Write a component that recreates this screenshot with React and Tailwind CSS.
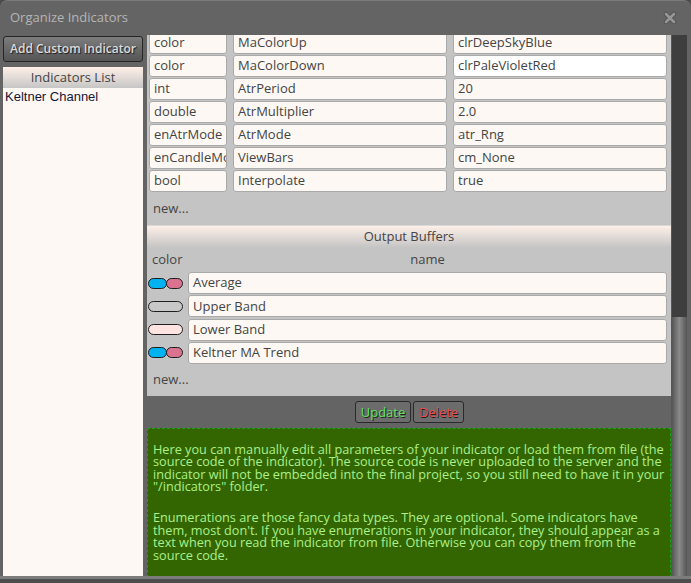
import React from 'react';

const params = [
  ['color', 'MaColorUp', 'clrDeepSkyBlue'],
  ['color', 'MaColorDown', 'clrPaleVioletRed', true],
  ['int', 'AtrPeriod', '20'],
  ['double', 'AtrMultiplier', '2.0'],
  ['enAtrMode', 'AtrMode', 'atr_Rng'],
  ['enCandleMode', 'ViewBars', 'cm_None'],
  ['bool', 'Interpolate', 'true'],
];

const buffers = [
  { name: 'Average', colors: ['bg-[#00b2f0]', 'bg-[#d9738f]'] },
  { name: 'Upper Band', colors: ['bg-[#c8c8c8]'] },
  { name: 'Lower Band', colors: ['bg-[#ffe4e1]'] },
  { name: 'Keltner MA Trend', colors: ['bg-[#00b2f0]', 'bg-[#d9738f]'] },
];

const help1 = [
  'Here you can manually edit all parameters of your indicator or load them from file (the',
  'source code of the indicator). The source code is never uploaded to the server and the',
  'indicator will not be embedded into the final project, so you still need to have it in your',
  '"/indicators" folder.',
];

const help2 = [
  'Enumerations are those fancy data types. They are optional. Some indicators have',
  "them, most don't. If you have enumerations in your indicator, they should appear as a",
  'text when you read the indicator from file. Otherwise you can copy them from the',
  'source code.',
];

function Field({ children, className = '', white }) {
  return (
    <div
      className={`h-[22px] border border-[#a9a9a9] rounded-[3px] px-[4px] flex items-center overflow-hidden whitespace-nowrap text-[13px] text-[#444] ${
        white ? 'bg-white' : 'bg-[#fdf8f4]'
      } ${className}`}
    >
      {children}
    </div>
  );
}

function CloseIcon() {
  return (
    <svg width="14" height="14" viewBox="0 0 14 14">
      <path d="M3 3 L11 11 M11 3 L3 11" stroke="#505050" strokeWidth="4.5" strokeLinecap="round" />
      <path d="M3 3 L11 11 M11 3 L3 11" stroke="#979797" strokeWidth="2.6" strokeLinecap="round" />
    </svg>
  );
}

export default function App() {
  return (
    <div className="w-[691px] h-[583px] bg-[#4d4d4d] overflow-hidden" style={{ fontFamily: '"Open Sans", "Noto Sans", sans-serif' }}>
      <div className="w-[691px] h-[579px] bg-[#646464] rounded-t-[8px] border-t border-[#7a7a7a] flex flex-col border-b-[3px] border-b-[#7c7c7c]">
        {/* title bar */}
        <div className="h-[34px] flex items-center justify-between pl-[10px] pr-[14px] shrink-0">
          <span className="text-[13px] text-[#b5b5b5]">Organize Indicators</span>
          <CloseIcon />
        </div>

        <div className="flex flex-1 min-h-0">
          {/* left column */}
          <div className="w-[140px] ml-[3px] flex flex-col">
            <button className="mt-px h-[26px] rounded-[3px] border border-[#262626] bg-gradient-to-b from-[#7d7d7d] to-[#555] text-[12px] font-semibold text-[#dadada] [text-shadow:1px_1px_1px_#1e1e1e]">
              Add Custom Indicator
            </button>
            <div className="mt-[5px] h-[21px] bg-gradient-to-b from-[#fff0e8] to-[#c6c6c6] flex items-center justify-center text-[13px] text-[#444]">
              Indicators List
            </div>
            <div className="flex-1 bg-[#fdf8f4] px-[2px] pt-px">
              <div className="text-[13px] text-[#151538] leading-[16px]" style={{ fontFamily: '"Liberation Sans", Arial, sans-serif' }}>
                Keltner Channel
              </div>
            </div>
          </div>

          {/* right pane */}
          <div className="ml-[4px] w-[524px] bg-[#c4c4c4] overflow-hidden">
            <div className="-mt-[3px] pl-[2px] pr-[4px] flex flex-col gap-px">
              {params.map(([type, name, value, white], i) => (
                <div key={i} className="flex gap-[6px]">
                  <Field className="w-[78px]">{type}</Field>
                  <Field className="w-[214px]">{name}</Field>
                  <Field className="w-[214px]" white={white}>{value}</Field>
                </div>
              ))}
            </div>
            <div className="h-[33px] flex items-center pl-[6px] text-[13px] text-[#444]">new...</div>

            <div className="h-[23px] border-t border-[#d8d8d8] bg-gradient-to-b from-[#fdf0e8] to-[#c4c4c4] flex items-center justify-center text-[13px] text-[#444]">
              Output Buffers
            </div>
            <div className="h-[24px] flex items-center text-[13px] text-[#444]">
              <span className="pl-[5px] w-[41px]">color</span>
              <span className="w-[479px] text-center">name</span>
            </div>

            <div className="flex flex-col gap-[1.33px] pr-[4px]">
              {buffers.map((b) => (
                <div key={b.name} className="flex items-center">
                  <div className="w-[41px] pl-px flex">
                    {b.colors.length === 2 ? (
                      <>
                        <span className={`w-[19px] h-[11px] rounded-full border border-[#1e1e1e] ${b.colors[0]}`} />
                        <span className={`w-[17px] h-[11px] rounded-full border border-[#1e1e1e] -ml-px ${b.colors[1]}`} />
                      </>
                    ) : (
                      <span className={`w-[35px] h-[11px] rounded-full border border-[#1e1e1e] ${b.colors[0]}`} />
                    )}
                  </div>
                  <Field className="flex-1">{b.name}</Field>
                </div>
              ))}
            </div>
            <div className="h-[32px] flex items-center pl-[6px] text-[13px] text-[#444]">new...</div>

            <div className="h-[32px] bg-[#646464] flex items-center justify-center gap-[2px] pl-[1px] pt-px">
              <button className="w-[56px] h-[22px] rounded-[3px] border border-[#2a2a2a] bg-[#6c6c6c] text-[13px] text-[#5ee05e] [text-shadow:1px_1px_0_#1e1e1e]">
                Update
              </button>
              <button className="w-[51px] h-[22px] rounded-[3px] border border-[#2a2a2a] bg-[#6c6c6c] text-[13px] text-[#ec4a4a] [text-shadow:1px_1px_0_#1e1e1e]">
                Delete
              </button>
            </div>

            <div className="h-[160px] bg-[#336600] border-t border-l border-r border-dashed border-[#1aa01a] pt-[14px] pl-[5px] text-[12.7px] leading-[12.5px] text-[#aaf08c]">
              {help1.map((l) => (
                <div key={l} className="whitespace-nowrap">{l}</div>
              ))}
              <div className="h-[18.5px]" />
              {help2.map((l) => (
                <div key={l} className="whitespace-nowrap">{l}</div>
              ))}
            </div>
          </div>

          {/* scrollbar */}
          <div className="w-[16px] bg-[#3e3e3e] border-l border-[#575757] flex flex-col">
            <div className="h-[282px]" />
            <div className="flex-1 bg-gradient-to-r from-[#565656] via-[#8a8a8a] to-[#555]" />
          </div>
        </div>
      </div>
    </div>
  );
}
